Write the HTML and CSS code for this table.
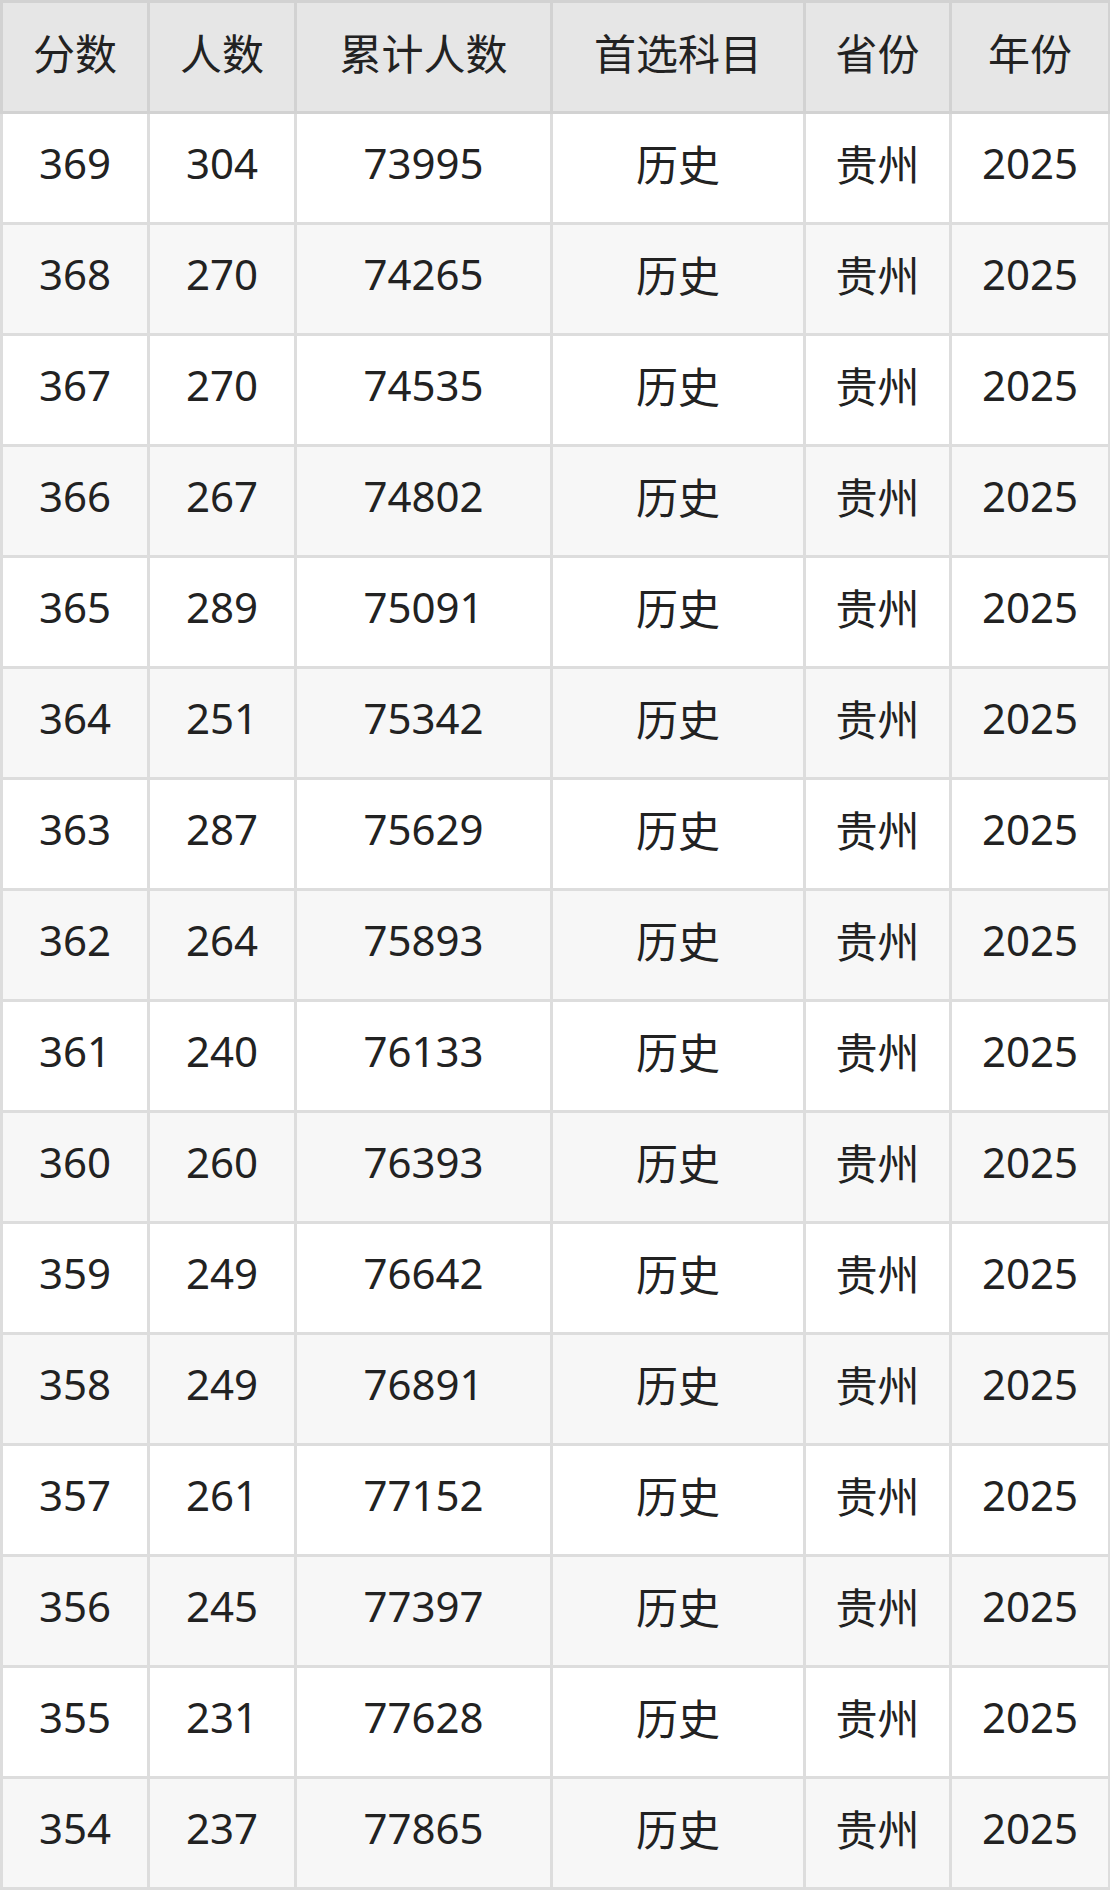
FILE: index.html
```html
<!DOCTYPE html>
<html lang="zh">
<head>
<meta charset="utf-8">
<link rel="stylesheet" href="styles.css">
</head>
<body>
<table class="score-table">
<colgroup>
<col class="c1"><col class="c2"><col class="c3"><col class="c4"><col class="c5"><col class="c6">
</colgroup>
<thead>
<tr><th>分数</th><th>人数</th><th>累计人数</th><th>首选科目</th><th>省份</th><th>年份</th></tr>
</thead>
<tbody>
<tr><td>369</td><td>304</td><td>73995</td><td>历史</td><td>贵州</td><td>2025</td></tr>
<tr><td>368</td><td>270</td><td>74265</td><td>历史</td><td>贵州</td><td>2025</td></tr>
<tr><td>367</td><td>270</td><td>74535</td><td>历史</td><td>贵州</td><td>2025</td></tr>
<tr><td>366</td><td>267</td><td>74802</td><td>历史</td><td>贵州</td><td>2025</td></tr>
<tr><td>365</td><td>289</td><td>75091</td><td>历史</td><td>贵州</td><td>2025</td></tr>
<tr><td>364</td><td>251</td><td>75342</td><td>历史</td><td>贵州</td><td>2025</td></tr>
<tr><td>363</td><td>287</td><td>75629</td><td>历史</td><td>贵州</td><td>2025</td></tr>
<tr><td>362</td><td>264</td><td>75893</td><td>历史</td><td>贵州</td><td>2025</td></tr>
<tr><td>361</td><td>240</td><td>76133</td><td>历史</td><td>贵州</td><td>2025</td></tr>
<tr><td>360</td><td>260</td><td>76393</td><td>历史</td><td>贵州</td><td>2025</td></tr>
<tr><td>359</td><td>249</td><td>76642</td><td>历史</td><td>贵州</td><td>2025</td></tr>
<tr><td>358</td><td>249</td><td>76891</td><td>历史</td><td>贵州</td><td>2025</td></tr>
<tr><td>357</td><td>261</td><td>77152</td><td>历史</td><td>贵州</td><td>2025</td></tr>
<tr><td>356</td><td>245</td><td>77397</td><td>历史</td><td>贵州</td><td>2025</td></tr>
<tr><td>355</td><td>231</td><td>77628</td><td>历史</td><td>贵州</td><td>2025</td></tr>
<tr><td>354</td><td>237</td><td>77865</td><td>历史</td><td>贵州</td><td>2025</td></tr>
</tbody>
</table>
</body>
</html>
```
FILE: styles.css
```css
html, body {
  margin: 0;
  padding: 0;
  background: #ffffff;
}
.score-table {
  width: 1108px;
  table-layout: fixed;
  border-collapse: collapse;
  font-family: "Noto Sans", "Noto Sans CJK SC", sans-serif;
  font-size: 42px;
  color: #222222;
  margin: 0;
}
.c1 { width: 147px; }
.c2 { width: 147px; }
.c3 { width: 256px; }
.c4 { width: 253px; }
.c5 { width: 146px; }
.c6 { width: 159px; }
.score-table th,
.score-table td {
  border: 3px solid #dddddd;
  text-align: center;
  vertical-align: middle;
  padding: 0 0 12px 0;
  font-weight: 400;
}
.score-table tr {
  height: 111px;
}
.score-table th {
  background: #e6e6e6;
  border-color: #d2d2d2;
}
.score-table tbody tr:nth-child(even) td {
  background: #f7f7f7;
}
```
